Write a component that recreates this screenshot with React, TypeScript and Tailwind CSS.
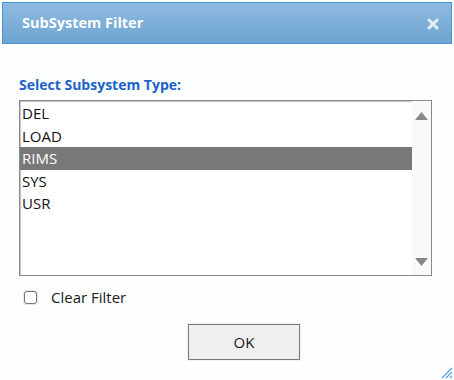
const items = ["DEL", "LOAD", "RIMS", "SYS", "USR"]

export default function App() {
  return (
    <div
      className="relative w-[454px] h-[380px] bg-[#fdfefe] pt-[2px] px-[2px] overflow-hidden"
      style={{ fontFamily: '"Open Sans", "Noto Sans", sans-serif' }}
    >
      {/* title bar */}
      <div className="h-[42px] flex items-center justify-between border border-[#4b92d2] bg-gradient-to-b from-[#8fbadf] to-[#6ca5d1] pl-[19px] pr-[12px]">
        <span className="text-white font-bold text-[14.5px]">SubSystem Filter</span>
        <svg width="12" height="12" viewBox="0 0 12 12" className="mt-[1px]">
          <path d="M2 2 L10 10 M10 2 L2 10" stroke="#e4eef7" strokeWidth="3" strokeLinecap="round" />
        </svg>
      </div>

      <div className="pl-[17px] pr-[20px]">
        <div className="mt-[32px] text-[14px] font-bold text-[#1b63c9] leading-[18px]">
          Select Subsystem Type:
        </div>

        {/* list box */}
        <div className="mt-[6px] h-[176px] flex border border-[#8a8a8a] bg-white shadow-[inset_1px_1px_1px_rgba(0,0,0,0.25)]">
          <div className="flex-1 pt-[1px]">
            {items.map((it) => (
              <div
                key={it}
                className={
                  "h-[22.6px] leading-[22.6px] pl-[2px] text-[15px] " +
                  (it === "RIMS" ? "bg-[#787878] text-white" : "text-[#111]")
                }
              >
                {it}
              </div>
            ))}
          </div>
          <div className="w-[19px] bg-[#f9f9f9] flex flex-col items-center justify-between pt-[11px] pb-[9px]">
            <svg width="13" height="8" viewBox="0 0 13 8">
              <path d="M6.5 0 L13 8 L0 8 Z" fill="#888" />
            </svg>
            <svg width="13" height="8" viewBox="0 0 13 8">
              <path d="M0 0 L13 0 L6.5 8 Z" fill="#888" />
            </svg>
          </div>
        </div>

        {/* clear filter */}
        <div className="mt-[11px] flex items-center pl-[5px]">
          <span className="w-[13px] h-[13px] rounded-[3px] border border-[#777] bg-white shadow-[0_0_0_1px_#e6e6e6]" />
          <span className="ml-[14px] text-[15px] text-[#1a1a1a] leading-[20px]">Clear Filter</span>
        </div>

        <div className="mt-[17px] flex justify-center pl-[37px]">
          <button className="w-[112px] h-[36px] border border-[#7a7a7a] bg-[#efefef] text-[15px] text-[#1a1a1a] shadow-[0_0_0_1px_#f1f1f1]">
            OK
          </button>
        </div>
      </div>

      {/* resize grip */}
      <svg width="14" height="14" viewBox="0 0 14 14" className="absolute right-[1px] bottom-[1px]">
        <path d="M13 3 L3 13 M13 7 L7 13 M13 11 L11 13" stroke="#5ea3e0" strokeWidth="1.2" />
      </svg>
    </div>
  )
}
